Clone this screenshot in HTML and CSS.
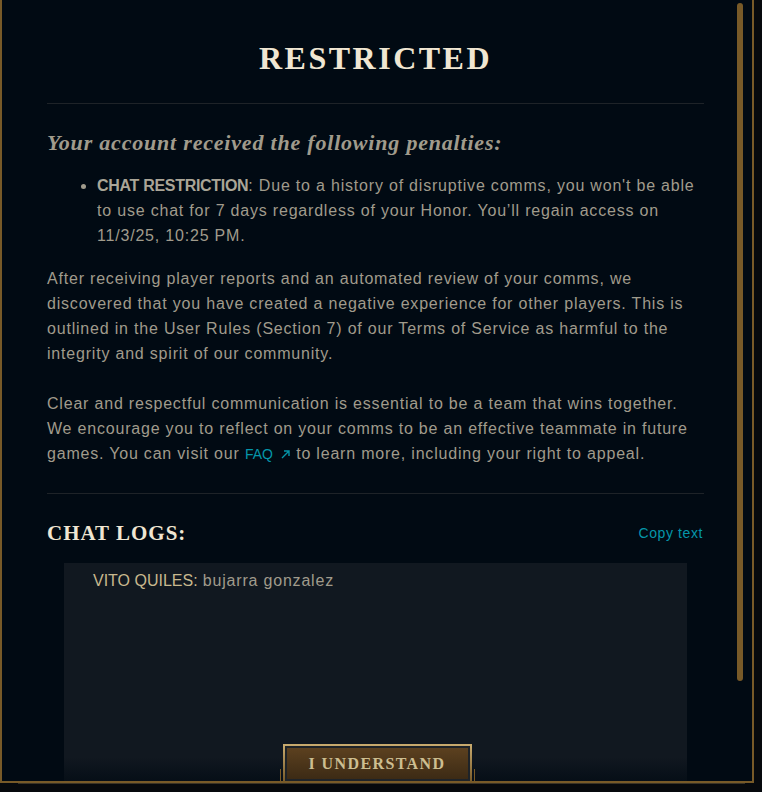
FILE: index.html
```html
<!DOCTYPE html>
<html lang="en">

<head>
  <meta charset="UTF-8">
  <meta name="viewport" content="width=device-width, initial-scale=1.0">
  <title>Restricted</title>
  <link rel="stylesheet" href="styles.css">
</head>

<body>
  <div class="modal">
    <div class="content">
      <h1 class="title">RESTRICTED</h1>
      <hr class="rule">

      <h2 class="subhead">Your account received the following penalties:</h2>
      <ul class="penalties">
        <li><strong>CHAT RESTRICTION</strong>: Due to a history of disruptive comms, you won't be able to use chat for 7 days regardless of your Honor. You’ll regain access on 11/3/25, 10:25 PM.</li>
      </ul>

      <p class="copy">After receiving player reports and an automated review of your comms, we discovered that you have created a negative experience for other players. This is outlined in the User Rules (Section 7) of our Terms of Service as harmful to the integrity and spirit of our community.</p>
      <p class="copy">Clear and respectful communication is essential to be a team that wins together. We encourage you to reflect on your comms to be an effective teammate in future games. You can visit our <a href="#" class="link faq">FAQ<svg class="arrow" width="11" height="11" viewBox="0 0 11 11"><path d="M2 9 L9 2 M4 2 H9 V7" fill="none" stroke="currentColor" stroke-width="1.4"/></svg></a> to learn more, including your right to appeal.</p>

      <hr class="rule">

      <div class="logs-head">
        <h2 class="logs-title">CHAT LOGS:</h2>
        <a href="#" class="link copy-link">Copy text</a>
      </div>
      <div class="logs">
        <p><span class="speaker">VITO QUILES:</span> bujarra gonzalez</p>
      </div>
    </div>

    <div class="scrollbar"></div>

    <div class="footer">
      <div class="cta">
        <button class="cta-btn">I UNDERSTAND</button>
      </div>
    </div>
  </div>
  <div class="under"></div>
</body>

</html>
```

FILE: styles.css
```css
body {
  margin: 0;
  padding: 0;
  background-color: #06090d;
  font-family: "Liberation Sans", Arial, sans-serif;
  overflow: hidden;
  width: 762px;
  height: 792px;
}

.modal {
  position: relative;
  box-sizing: border-box;
  width: 754px;
  height: 783px;
  background-color: #010a13;
  border: 2px solid #785a28;
  border-top: none;
  overflow: hidden;
}

.content {
  box-sizing: border-box;
  height: 100%;
  padding: 38px 48px 0 45px;
  display: flex;
  flex-direction: column;
}

.title {
  margin: 0;
  text-align: center;
  font-family: "Liberation Serif", serif;
  font-size: 32px;
  line-height: 40px;
  letter-spacing: 2.5px;
  color: #f0e6d2;
}

.rule {
  margin: 25px 0 0;
  border: none;
  border-top: 1px solid #1e2328;
  height: 0;
}

.subhead {
  margin: 25px 0 0;
  font-family: "Liberation Serif", serif;
  font-style: italic;
  font-size: 22px;
  line-height: 28px;
  letter-spacing: 0.8px;
  color: #a09b8c;
}

.penalties {
  margin: 16px 0 0;
  padding-left: 50px;
  font-size: 16px;
  line-height: 25px;
  letter-spacing: 0.8px;
  color: #a09b8c;
}

.penalties strong {
  letter-spacing: -0.3px;
  color: #aaa597;
}

.copy {
  margin: 18px 0 0;
  font-size: 16px;
  line-height: 25px;
  letter-spacing: 0.8px;
  color: #a09b8c;
}

.copy + .copy {
  margin-top: 25px;
}

.copy + .rule {
  margin-top: 26px;
}

.link {
  color: #0596aa;
  text-decoration: none;
  font-size: 14px;
  letter-spacing: 0.6px;
}

.faq {
  letter-spacing: 0;
}

.arrow {
  margin-left: 7px;
  vertical-align: -1px;
}

.logs-head {
  margin-top: 25px;
  display: flex;
  justify-content: space-between;
  align-items: center;
}

.logs-title {
  margin: 0;
  font-family: "Liberation Serif", serif;
  font-size: 21px;
  line-height: 28px;
  letter-spacing: 1px;
  color: #f0e6d2;
}

.copy-link {
  margin-right: 1px;
}

.logs {
  flex: 1;
  margin: 16px 17px 0;
  padding: 5px 29px;
  background-color: #111820;
}

.logs p {
  margin: 0;
  font-size: 16px;
  line-height: 25px;
  letter-spacing: 0.8px;
  color: #a09b8c;
}

.speaker {
  letter-spacing: 0;
  color: #c8b88e;
}

/* overlays */
.scrollbar {
  position: absolute;
  top: 3px;
  right: 9px;
  width: 6px;
  height: 678px;
  border-radius: 3px;
  background-color: #785a28;
}

.footer {
  position: absolute;
  left: 0;
  right: 0;
  bottom: -2px;
  height: 40px;
  display: flex;
  justify-content: center;
  align-items: flex-end;
  background: linear-gradient(to bottom, rgba(1, 10, 19, 0) 0%, rgba(1, 10, 19, 0) 35%, rgba(1, 10, 19, 0.75) 100%);
}

.cta {
  position: relative;
  padding: 0 3px;
}

.cta::before,
.cta::after {
  content: "";
  position: absolute;
  bottom: 2px;
  width: 1px;
  height: 12px;
  background-color: #785a28;
}

.cta::before {
  left: 0;
}

.cta::after {
  right: 0;
}

.cta-btn {
  display: block;
  box-sizing: border-box;
  width: 189px;
  height: 39px;
  padding: 0;
  border: 2px solid #c8aa6e;
  border-image: linear-gradient(to bottom, #c8aa6e, #785a28) 1;
  box-shadow: inset 0 0 0 2px #1e2328;
  background: linear-gradient(to bottom, #5e4220, #3a2914);
  font-family: "Liberation Serif", serif;
  font-weight: bold;
  font-size: 16px;
  letter-spacing: 1.4px;
  color: #cdbe91;
  cursor: pointer;
}

.under {
  margin-left: 18px;
  width: 727px;
  height: 3px;
  border-top: 1px solid #3a3325;
}
```
